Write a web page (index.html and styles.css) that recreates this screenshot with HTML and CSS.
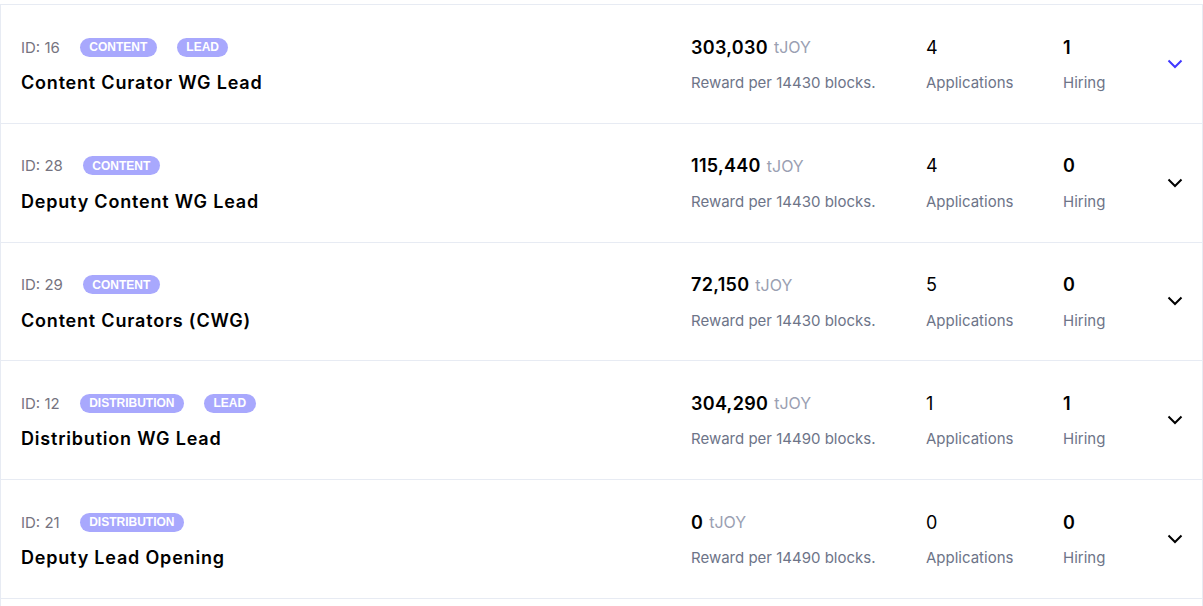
FILE: index.html
```html
<!DOCTYPE html>
<html>
<head>
<meta charset="utf-8">
<link rel="stylesheet" href="styles.css">
</head>
<body>
<div class="list">
  <div class="row">
    <div class="main">
      <div class="meta"><span class="id">ID: 16</span><span class="badge">CONTENT</span><span class="badge">LEAD</span></div>
      <div class="title">Content Curator WG Lead</div>
    </div>
    <div class="col">
      <div class="value"><b>303,030</b><span class="unit">tJOY</span></div>
      <div class="label">Reward per 14430 blocks.</div>
    </div>
    <div class="col">
      <div class="value regular">4</div>
      <div class="label">Applications</div>
    </div>
    <div class="col">
      <div class="value"><b>1</b></div>
      <div class="label">Hiring</div>
    </div>
    <div class="chev active"><svg viewBox="0 0 16 10" width="16" height="10"><path d="M1.5 1.5 L8 8 L14.5 1.5" fill="none" stroke="currentColor" stroke-width="2"/></svg></div>
  </div>
  <div class="row">
    <div class="main">
      <div class="meta"><span class="id">ID: 28</span><span class="badge">CONTENT</span></div>
      <div class="title">Deputy Content WG Lead</div>
    </div>
    <div class="col">
      <div class="value"><b>115,440</b><span class="unit">tJOY</span></div>
      <div class="label">Reward per 14430 blocks.</div>
    </div>
    <div class="col">
      <div class="value regular">4</div>
      <div class="label">Applications</div>
    </div>
    <div class="col">
      <div class="value"><b>0</b></div>
      <div class="label">Hiring</div>
    </div>
    <div class="chev"><svg viewBox="0 0 16 10" width="16" height="10"><path d="M1.5 1.5 L8 8 L14.5 1.5" fill="none" stroke="currentColor" stroke-width="2"/></svg></div>
  </div>
  <div class="row">
    <div class="main">
      <div class="meta"><span class="id">ID: 29</span><span class="badge">CONTENT</span></div>
      <div class="title">Content Curators (CWG)</div>
    </div>
    <div class="col">
      <div class="value"><b>72,150</b><span class="unit">tJOY</span></div>
      <div class="label">Reward per 14430 blocks.</div>
    </div>
    <div class="col">
      <div class="value regular">5</div>
      <div class="label">Applications</div>
    </div>
    <div class="col">
      <div class="value"><b>0</b></div>
      <div class="label">Hiring</div>
    </div>
    <div class="chev"><svg viewBox="0 0 16 10" width="16" height="10"><path d="M1.5 1.5 L8 8 L14.5 1.5" fill="none" stroke="currentColor" stroke-width="2"/></svg></div>
  </div>
  <div class="row">
    <div class="main">
      <div class="meta"><span class="id">ID: 12</span><span class="badge">DISTRIBUTION</span><span class="badge">LEAD</span></div>
      <div class="title">Distribution WG Lead</div>
    </div>
    <div class="col">
      <div class="value"><b>304,290</b><span class="unit">tJOY</span></div>
      <div class="label">Reward per 14490 blocks.</div>
    </div>
    <div class="col">
      <div class="value regular">1</div>
      <div class="label">Applications</div>
    </div>
    <div class="col">
      <div class="value"><b>1</b></div>
      <div class="label">Hiring</div>
    </div>
    <div class="chev"><svg viewBox="0 0 16 10" width="16" height="10"><path d="M1.5 1.5 L8 8 L14.5 1.5" fill="none" stroke="currentColor" stroke-width="2"/></svg></div>
  </div>
  <div class="row">
    <div class="main">
      <div class="meta"><span class="id">ID: 21</span><span class="badge">DISTRIBUTION</span></div>
      <div class="title">Deputy Lead Opening</div>
    </div>
    <div class="col">
      <div class="value"><b>0</b><span class="unit">tJOY</span></div>
      <div class="label">Reward per 14490 blocks.</div>
    </div>
    <div class="col">
      <div class="value regular">0</div>
      <div class="label">Applications</div>
    </div>
    <div class="col">
      <div class="value"><b>0</b></div>
      <div class="label">Hiring</div>
    </div>
    <div class="chev"><svg viewBox="0 0 16 10" width="16" height="10"><path d="M1.5 1.5 L8 8 L14.5 1.5" fill="none" stroke="currentColor" stroke-width="2"/></svg></div>
  </div>
  <div class="row"></div>
</div>
</body>
</html>
```
FILE: styles.css
```css
* { box-sizing: border-box; }
html, body { margin: 0; padding: 0; background: #fff; }
body {
  font-family: Inter, "Noto Sans", sans-serif;
  color: #000;
  overflow: hidden;
}
.list {
  padding-top: 4px;
  display: flex;
  flex-direction: column;
}
.row {
  display: grid;
  grid-template-columns: 670px 235px 137px 100px 24px;
  align-items: center;
  height: 118.8px;
  padding: 0 15px 0 20px;
  border: 1px solid #e7ebf3;
  border-top: none;
  background: #fff;
}
.list .row:first-child { border-top: 1px solid #e7ebf3; height: 119.8px; }
.main, .col {
  display: flex;
  flex-direction: column;
  gap: 14px;
  align-self: start;
  padding-top: 32px;
}
.meta {
  display: flex;
  align-items: center;
  height: 20px;
  gap: 20px;
}
.id {
  font-size: 15px;
  color: #767380;
}
.badge {
  display: inline-flex;
  align-items: center;
  height: 19px;
  padding: 0 9.5px;
  border-radius: 10px;
  background: #a8a8fd;
  color: #fff;
  font-family: "Liberation Sans", Arial, sans-serif;
  font-size: 12px;
  font-weight: 700;
}
.title {
  font-size: 18px;
  font-weight: 600;
  line-height: 24px;
  letter-spacing: 0.8px;
  color: #000;
}
.value {
  height: 20px;
  display: flex;
  align-items: center;
  font-size: 18px;
}
.value b { font-weight: 600; letter-spacing: 0.3px; }
.value.regular { font-weight: 400; }
.unit { color: #9aa0b2; font-size: 16px; font-weight: 400; margin-left: 6px; }
.label {
  font-size: 15px;
  line-height: 24px;
  color: #6d7488;
}
.chev {
  display: flex;
  justify-content: center;
  color: #000;
}
.chev.active { color: #4038ff; }
.chev svg { display: block; }
```
